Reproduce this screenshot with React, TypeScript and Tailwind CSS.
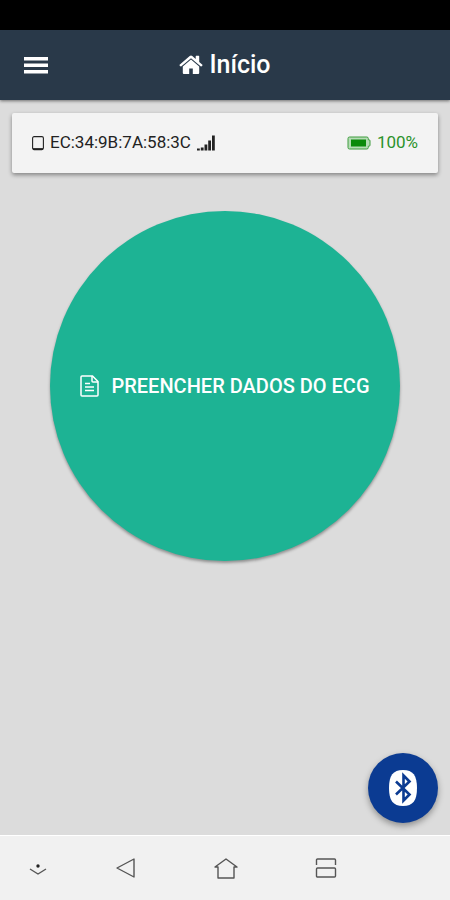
import type { ReactNode } from 'react';

function MenuIcon() {
  return (
    <svg viewBox="0 0 24 18" className="w-6 h-[18px]" fill="currentColor" aria-hidden="true">
      <path d="M0 1h24v3.500H0zM0 7.500h24v3.500H0zM0 14h24v3.500H0z" />
    </svg>
  );
}

function HomeIcon() {
  return (
    <svg viewBox="0 0 24 20" className="w-6 h-5" fill="currentColor" aria-hidden="true">
      <path d="M12 4.600 20.200 11.400V18a1 1 0 0 1-1 1h-5.400v-5.600h-3.600V19H4.800a1 1 0 0 1-1-1v-6.600z" />
      <path d="M23.400 9.700 20.200 7V1.200a.5.500 0 0 0-.5-.5h-2.500a.5.500 0 0 0-.5.500V4l-3.400-2.900a2 2 0 0 0-2.600 0L.6 9.700a.5.500 0 0 0 0 .7l.8.900c.2.200.5.200.7.100L12 3.200l9.900 8.200c.2.100.5.100.7-.1l.8-.9a.5.500 0 0 0 0-.7z" />
    </svg>
  );
}

function TabletIcon() {
  return (
    <svg viewBox="0 0 12 15" className="w-3 h-[15px]" fill="none" stroke="currentColor" aria-hidden="true">
      <rect x="0.6" y="0.6" width="10.800" height="13" rx="1.500" strokeWidth="1.100" />
      <path d="M1 13h10" strokeWidth="1.800" />
    </svg>
  );
}

function SignalIcon() {
  return (
    <svg viewBox="0 0 18 16" className="w-[18px] h-4" fill="currentColor" aria-hidden="true">
      <path d="M0 13.500h2.800v2H0zM3.800 12.500h2.800v3H3.800zM7.500 9.500h2.800v6H7.500zM11.200 5.500h2.800v10h-2.800zM15 .5h2.800v15H15z" />
    </svg>
  );
}

function BatteryIcon() {
  return (
    <svg viewBox="0 0 24 14" className="w-6 h-3.5" aria-hidden="true">
      <path
        d="M2.500 1h17.300a1.500 1.500 0 0 1 1.500 1.500v1.300h.7a1 1 0 0 1 1 1v4.400a1 1 0 0 1-1 1h-.7v1.300a1.500 1.500 0 0 1-1.500 1.500H2.500A1.500 1.500 0 0 1 1 11.500v-9A1.500 1.500 0 0 1 2.500 1z"
        fill="#b5dcb5"
        stroke="#3f9c3f"
      />
      <path d="M4 3.500h15v7H4z" fill="#0b8a0b" />
    </svg>
  );
}

function FileIcon() {
  return (
    <svg viewBox="0 0 19 22" className="w-[19px] h-[22px]" fill="none" stroke="currentColor" strokeWidth="1.500" aria-hidden="true">
      <path d="M2 1h10.500L18 6.500V20a1 1 0 0 1-1 1H2a1 1 0 0 1-1-1V2a1 1 0 0 1 1-1z" />
      <path d="M12 1v5a1 1 0 0 0 1 1h5M5 8.500h5M5 12h9M5 15.500h9" />
    </svg>
  );
}

function BluetoothIcon() {
  return (
    <svg viewBox="0 0 28 38" className="w-7 h-[38px]" aria-hidden="true">
      <path
        d="M14 1c10 0 14 5.500 14 18s-4 18-14 18S0 31.500 0 19 4 1 14 1z"
        fill="white"
      />
      <path d="M7 12.500 20.500 25.500 14.500 31.500V6.500L20.500 12.500 7 25.500" fill="none" stroke="#0b3b92" strokeWidth="2.600" />
    </svg>
  );
}

interface NavButtonProps {
  label: string;
  children: ReactNode;
}

function NavButton({ label, children }: NavButtonProps) {
  return (
    <button type="button" aria-label={label} className="flex items-center justify-center">
      <svg viewBox="0 0 24 24" className="w-6 h-6" fill="none" stroke="currentColor" strokeWidth="1.400">
        {children}
      </svg>
    </button>
  );
}

export default function App() {
  return (
    <div className="min-h-screen flex flex-col bg-[#dcdcdc] font-['Roboto',sans-serif]">
      {/* System status bar */}
      <div className="h-[30px] bg-black" />

      <header className="h-[70px] grid grid-cols-[72px_1fr_72px] items-center bg-[#293949] text-white shadow-[0_1px_3px_rgba(0,0,0,0.5)]">
        <button type="button" aria-label="Menu" className="h-full flex items-center justify-center">
          <MenuIcon />
        </button>
        <h1 className="flex items-center justify-center gap-1.5 text-[25px] font-medium">
          <HomeIcon />
          Início
        </h1>
      </header>

      <main className="flex-1 flex flex-col px-3 pt-[13px] pb-3">
        <section className="h-[60px] flex items-center justify-between px-5 bg-[#f3f3f3] text-[17px] rounded-xs shadow-[0_2px_4px_rgba(0,0,0,0.4)]">
          <div className="flex items-center gap-1.5 text-[#222]">
            <TabletIcon />
            <span>EC:34:9B:7A:58:3C</span>
            <SignalIcon />
          </div>
          <div className="flex items-center gap-1.5 text-[#2b922b]">
            <BatteryIcon />
            <span>100%</span>
          </div>
        </section>

        <button
          type="button"
          className="w-[350px] max-w-full aspect-square mt-[38px] self-center flex items-center justify-center gap-3 rounded-full bg-[#1db394] text-white text-xl font-medium shadow-[0_2px_3px_rgba(0,0,0,0.35)]"
        >
          <FileIcon />
          PREENCHER DADOS DO ECG
        </button>

        <button
          type="button"
          aria-label="Bluetooth"
          className="w-[70px] h-[70px] mt-auto self-end flex items-center justify-center rounded-full bg-[#0b3b92] shadow-[0_3px_6px_rgba(0,0,0,0.35)]"
        >
          <BluetoothIcon />
        </button>
      </main>

      {/* System navigation, last column stays empty */}
      <nav className="h-[65px] grid grid-cols-[76px_1fr_1fr_1fr_74px] bg-[#f1f1f1] border-t border-white text-[#555]">
        <NavButton label="Ocultar barra">
          <circle cx="12" cy="10" r="1.700" fill="#222" stroke="none" />
          <path d="m4 13 8 5 8-5" />
        </NavButton>
        <NavButton label="Voltar">
          <path d="M20 3v18L3 12z" strokeLinejoin="round" />
        </NavButton>
        <NavButton label="Tela inicial">
          <path d="M1 11 12 3l11 8h-3v11H4V11z" strokeLinejoin="round" />
        </NavButton>
        <NavButton label="Aplicativos recentes">
          <path d="M2.500 9V4a1 1 0 0 1 1-1h17a1 1 0 0 1 1 1v5" />
          <rect x="2.500" y="12" width="19" height="9" rx="1" />
        </NavButton>
      </nav>
    </div>
  );
}
